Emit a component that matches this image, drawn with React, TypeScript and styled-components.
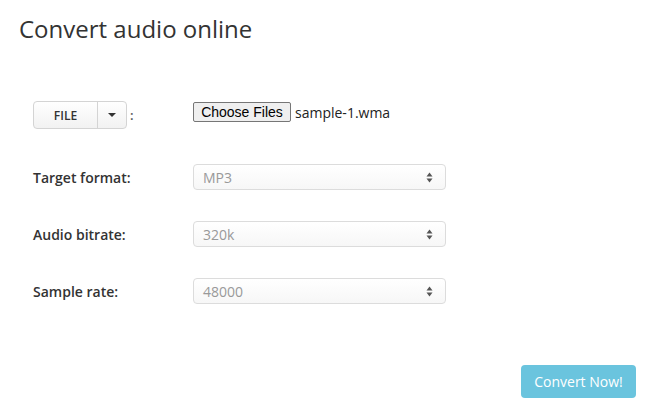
import React from "react";
import styled, { createGlobalStyle } from "styled-components";

const Global = createGlobalStyle`
  html, body { margin: 0; padding: 0; background: #ffffff; }
  body { font-family: "Open Sans", "DejaVu Sans", sans-serif; color: #333333; }
  * { box-sizing: border-box; }
`;

const Page = styled.div`
  width: 650px;
  height: 415px;
  padding: 0 14px 0 19px;
  display: flex;
  flex-direction: column;
`;

const Title = styled.h1`
  margin: 14px 0 0 0;
  font-size: 24px;
  line-height: 30px;
  font-weight: 400;
  color: #333333;
`;

const Form = styled.div`
  margin-top: 57px;
  padding-left: 14px;
  display: flex;
  flex-direction: column;
  gap: 31px;
`;

const Row = styled.div<{ $first?: boolean }>`
  display: grid;
  grid-template-columns: 160px 1fr;
  align-items: center;
  height: ${(p) => (p.$first ? "28px" : "26px")};
  margin-bottom: ${(p) => (p.$first ? "4px" : "0")};
`;

const Label = styled.div`
  font-size: 14px;
  font-weight: 600;
  color: #333333;
`;

const SourceCell = styled.div`
  display: flex;
  align-items: center;
  gap: 3px;
`;

const BtnGroup = styled.div`
  display: flex;
  height: 28px;
  border: 1px solid #d4d4d4;
  border-radius: 4px;
  background: linear-gradient(#ffffff, #f2f2f2);
  overflow: hidden;
`;

const GroupBtn = styled.div<{ $w: number }>`
  width: ${(p) => p.$w}px;
  display: flex;
  align-items: center;
  justify-content: center;
  font-size: 12px;
  font-weight: 600;
  color: #333333;
  & + & { border-left: 1px solid #d4d4d4; }
`;

const Caret = styled.span`
  width: 0;
  height: 0;
  border-left: 4px solid transparent;
  border-right: 4px solid transparent;
  border-top: 4px solid #333333;
`;

const Colon = styled.span`
  font-size: 13px;
  font-weight: 600;
  color: #555555;
`;

const FileCell = styled.div`
  align-self: start;
  margin-top: 1px;
  display: flex;
  align-items: center;
  gap: 4px;
`;

const ChooseBtn = styled.button`
  height: 20px;
  width: 98px;
  padding: 0;
  margin: 0;
  border: 1px solid #767676;
  border-radius: 2px;
  background: #efefef;
  font-family: "Liberation Sans", Arial, sans-serif;
  font-size: 14px;
  color: #000000;
`;

const FileName = styled.span`
  font-size: 14px;
  color: #222222;
`;

const Select = styled.div`
  width: 253px;
  height: 26px;
  border: 1px solid #dcdcdc;
  border-radius: 4px;
  background: linear-gradient(#ffffff, #f7f7f7);
  display: flex;
  align-items: center;
  justify-content: space-between;
  padding: 0 12px 0 9px;
  font-size: 14px;
  color: #999999;
`;

const Footer = styled.div`
  margin-top: auto;
  margin-bottom: 17px;
  display: flex;
  justify-content: flex-end;
`;

const Convert = styled.button`
  width: 115px;
  height: 33px;
  border: none;
  border-radius: 4px;
  background: #6ac4de;
  color: #ffffff;
  font-family: "Open Sans", sans-serif;
  font-size: 14px;
  padding: 0;
`;

const UpDown = () => (
  <svg width="7" height="11" viewBox="0 0 7 11">
    <path d="M3.5 0.5 L6.5 4.5 H0.5 Z" fill="#555" />
    <path d="M3.5 10.5 L6.5 6.5 H0.5 Z" fill="#555" />
  </svg>
);

const selects = [
  { label: "Target format:", value: "MP3" },
  { label: "Audio bitrate:", value: "320k" },
  { label: "Sample rate:", value: "48000" },
];

export default function App() {
  return (
    <>
      <Global />
      <Page>
        <Title>Convert audio online</Title>
        <Form>
          <Row $first>
            <SourceCell>
              <BtnGroup>
                <GroupBtn $w={63}>FILE</GroupBtn>
                <GroupBtn $w={29}>
                  <Caret />
                </GroupBtn>
              </BtnGroup>
              <Colon>:</Colon>
            </SourceCell>
            <FileCell>
              <ChooseBtn>Choose Files</ChooseBtn>
              <FileName>sample-1.wma</FileName>
            </FileCell>
          </Row>
          {selects.map((s) => (
            <Row key={s.label}>
              <Label>{s.label}</Label>
              <Select>
                <span>{s.value}</span>
                <UpDown />
              </Select>
            </Row>
          ))}
        </Form>
        <Footer>
          <Convert>Convert Now!</Convert>
        </Footer>
      </Page>
    </>
  );
}
